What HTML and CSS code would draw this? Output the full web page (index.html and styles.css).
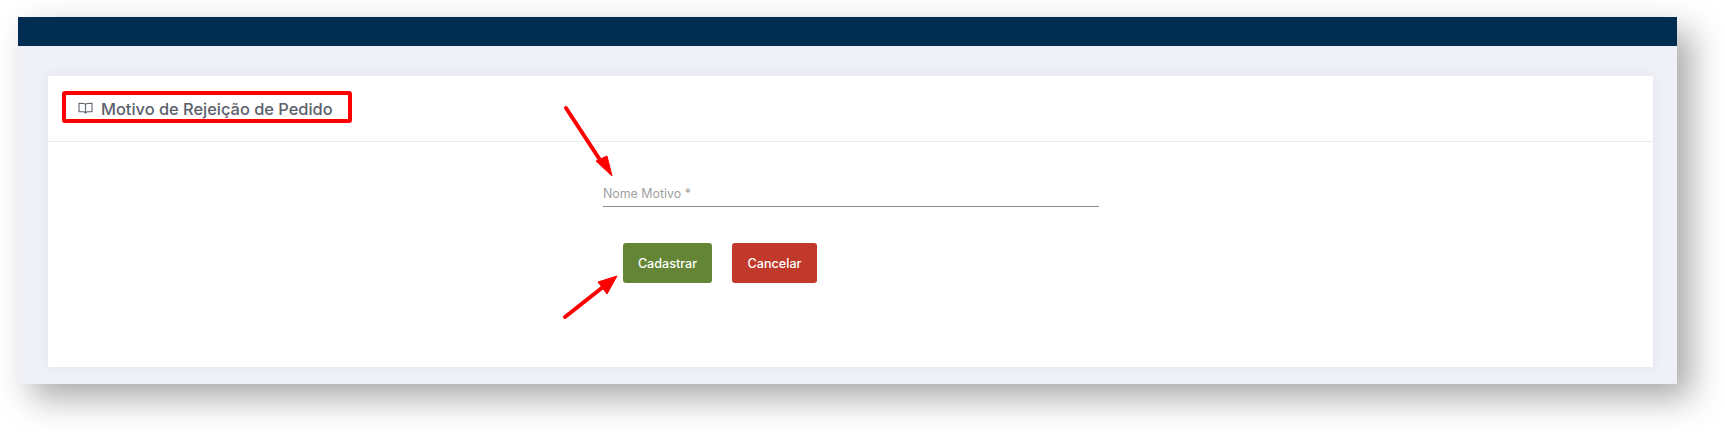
FILE: index.html
```html
<!doctype html>
<html lang="en">
  <head>
    <meta charset="UTF-8" />
    <title>Motivo de Rejeição de Pedido</title>
    <link rel="stylesheet" href="styles.css">
  </head>
  <body>
    <div class="frame">
      <div class="topbar"></div>
      <main class="content">
        <section class="card">
          <header class="card-header">
            <svg class="book-icon" width="15" height="13" viewBox="0 0 15 13" fill="none" stroke="#5f6670" stroke-width="1.1">
              <path d="M7.5 2.2C6.3 1.4 4 1.200 1 1.200v8.600h5l1.500 1.200 1.500-1.200h5V1.200c-3 0-5.300.2-6.500 1z"/>
              <path d="M7.500 2.200v8.800"/>
            </svg>
            <h1>Motivo de Rejeição de Pedido</h1>
          </header>
          <form class="card-body">
            <div class="field">
              <label>Nome Motivo *</label>
            </div>
            <div class="actions">
              <button type="button" class="btn btn-save">Cadastrar</button>
              <button type="button" class="btn btn-cancel">Cancelar</button>
            </div>
          </form>
        </section>
      </main>
    </div>

    <!-- Annotations drawn over the screenshot -->
    <div class="highlight"></div>
    <svg class="arrows" width="1725" height="432" viewBox="0 0 1725 432">
      <path d="M566 108L602 163" stroke="#f00" stroke-width="4" stroke-linecap="round"/>
      <path d="M612 176L596 161L607 156z" fill="#f00" stroke="#f00"/>
      <path d="M565 317L603 287" stroke="#f00" stroke-width="4" stroke-linecap="round"/>
      <path d="M617 276L607 294L598 282z" fill="#f00" stroke="#f00"/>
    </svg>
  </body>
</html>
```

FILE: styles.css
```css
body {
  margin: 0;
  height: 432px;
  overflow: hidden;
  background-color: #fff;
  font-family: Inter, Roboto, "Liberation Sans", sans-serif;
}

.frame {
  margin: 17px 48px 0 18px;
  height: 367px;
  background-color: #f0f1f7;
  box-shadow: 14px 14px 32px rgba(0,0,0,0.34);
}

.topbar {
  height: 29px;
  background-color: #022d52;
}

.content {
  padding: 30px 24px 17px 30px;
}

.card {
  height: 291px;
  background-color: #fff;
  box-shadow: 0 0 14px rgba(40,40,90,0.06);
}

.card-header {
  display: flex;
  align-items: center;
  gap: 8px;
  height: 66px;
  padding-left: 30px;
  border-bottom: 1px solid #e9ebef;
  box-sizing: border-box;
}

.card-header h1 {
  margin: 0;
  font-size: 16.400px;
  font-weight: 500;
  color: #5b616b;
}

.card-body {
  padding: 29px 0 0 555px;
}

.field {
  width: 496px;
  height: 36px;
  box-sizing: border-box;
  border-bottom: 1px solid #8b8b8b;
  display: flex;
  align-items: flex-end;
  padding-bottom: 5px;
}

.field label {
  font-size: 12.400px;
  font-weight: 400;
  color: #9f9f9f;
}

.actions {
  display: flex;
  gap: 20px;
  margin-top: 36px;
  padding-left: 20px;
}

.btn {
  height: 40px;
  border: 0;
  border-radius: 3px;
  color: #fff;
  font-family: inherit;
  font-size: 12.600px;
  font-weight: 500;
  padding: 0;
}

.btn-save {
  width: 89px;
  background-color: #648536;
}

.btn-cancel {
  width: 85px;
  background-color: #c0392b;
}

.highlight {
  position: absolute;
  left: 62px;
  top: 91px;
  width: 282px;
  height: 24px;
  border: 4px solid #f00;
  border-radius: 3px;
}

.arrows {
  position: absolute;
  left: 0;
  top: 0;
}
```
